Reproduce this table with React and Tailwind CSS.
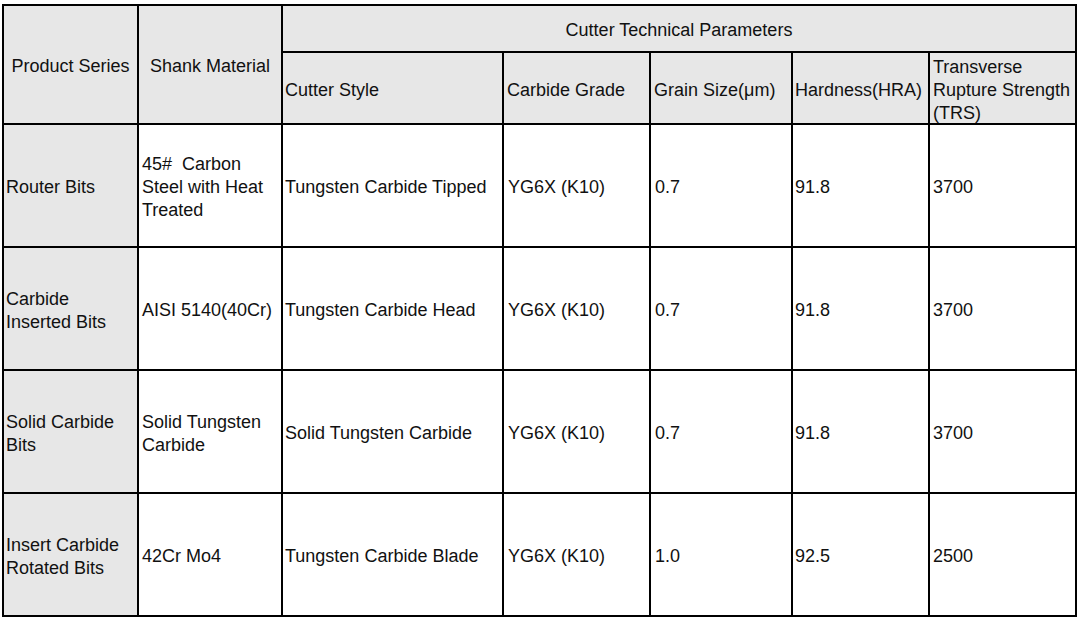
import React from 'react';

const rows = [
  {
    series: 'Router Bits',
    shank: '45#\u00a0 Carbon Steel with Heat Treated',
    style: 'Tungsten Carbide Tipped',
    grain: '0.7',
    hardness: '91.8',
    trs: '3700',
  },
  {
    series: 'Carbide Inserted Bits',
    shank: 'AISI 5140(40Cr)',
    style: 'Tungsten Carbide Head',
    grain: '0.7',
    hardness: '91.8',
    trs: '3700',
  },
  {
    series: 'Solid Carbide Bits',
    shank: 'Solid Tungsten Carbide',
    style: 'Solid Tungsten Carbide',
    grain: '0.7',
    hardness: '91.8',
    trs: '3700',
  },
  {
    series: 'Insert Carbide Rotated Bits',
    shank: '42Cr Mo4',
    style: 'Tungsten Carbide Blade',
    grain: '1.0',
    hardness: '92.5',
    trs: '2500',
  },
];

function Cell({ children, gray, center, className = '' }) {
  return (
    <div
      className={`flex items-center pt-[4px] pr-[2px] ${gray ? 'bg-[#e7e7e7]' : 'bg-white'} ${
        center ? 'justify-center text-center' : 'justify-start'
      } ${className}`}
    >
      <span>{children}</span>
    </div>
  );
}

export default function App() {
  return (
    <div
      className="w-[1081px] h-[619px] bg-white pl-[2px] pt-[4px] text-[18px] leading-[23px] text-[#111]"
      style={{ fontFamily: '"Liberation Sans", Arial, sans-serif' }}
    >
      <div className="inline-grid grid-cols-[133px_142px_219px_145px_140px_135px_145px] grid-rows-[45px_70px_121px_121px_121px_121px] gap-[2px] p-[2px] bg-black">
        {/* header */}
        <Cell gray center className="row-span-2 pl-[2px]">Product Series</Cell>
        <Cell gray center className="row-span-2 pl-[2px]">Shank Material</Cell>
        <Cell gray center className="col-span-5 pl-[2px]">Cutter Technical Parameters</Cell>
        <Cell gray className="pl-[2px]">Cutter Style</Cell>
        <Cell gray className="pl-[3px]">Carbide Grade</Cell>
        <Cell gray className="pl-[3px]">Grain Size(μm)</Cell>
        <Cell gray className="pl-[2px]">Hardness(HRA)</Cell>
        <Cell gray className="pl-[3px] pr-0">Transverse Rupture Strength (TRS)</Cell>

        {/* body */}
        {rows.map((r, i) => (
          <React.Fragment key={i}>
            <Cell gray className="pl-[2px]">{r.series}</Cell>
            <Cell className="pl-[3px]">{r.shank}</Cell>
            <Cell className="pl-[2px]">{r.style}</Cell>
            <Cell className="pl-[4px]">YG6X (K10)</Cell>
            <Cell className="pl-[4px]">{r.grain}</Cell>
            <Cell className="pl-[2px]">{r.hardness}</Cell>
            <Cell className="pl-[3px]">{r.trs}</Cell>
          </React.Fragment>
        ))}
      </div>
    </div>
  );
}
